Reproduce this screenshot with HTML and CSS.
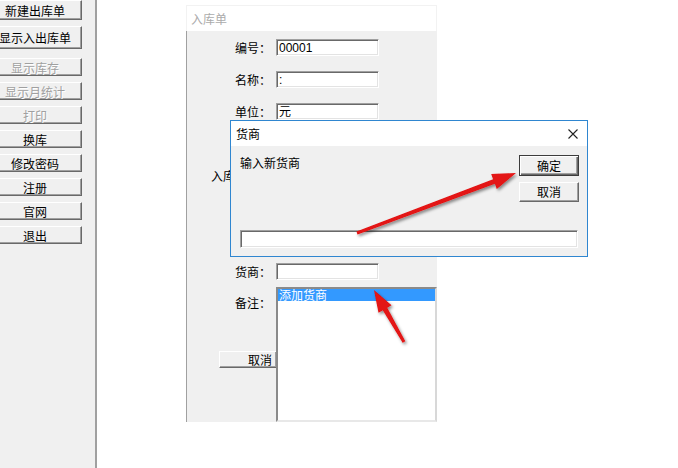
FILE: index.html
```html
<!DOCTYPE html>
<html lang="zh-CN">
<head>
<meta charset="utf-8">
<title>入库单</title>
<link rel="stylesheet" href="styles.css">
</head>
<body>
<div class="app">
  <aside class="sidebar">
    <button class="btn side b1">新建出库单</button>
    <button class="btn side b2">显示入出库单</button>
    <button class="btn side b3 dis">显示库存</button>
    <button class="btn side dis">显示月统计</button>
    <button class="btn side dis">打印</button>
    <button class="btn side">换库</button>
    <button class="btn side">修改密码</button>
    <button class="btn side">注册</button>
    <button class="btn side">官网</button>
    <button class="btn side">退出</button>
  </aside>

  <main class="main">
    <section class="win">
      <div class="win-title">入库单</div>
      <div class="win-body">
        <div class="fields">
          <span class="lbl">编号：</span><div class="field">00001</div>
          <span class="lbl">名称：</span><div class="field">:</div>
          <span class="lbl">单位：</span><div class="field">元</div>
          <span class="lbl"></span><div class="field"></div>
          <span class="lbl clip"><span>入库</span></span><div class="field"></div>
          <span class="lbl"></span><div class="field"></div>
          <span class="lbl"></span><div class="field"></div>
          <span class="lbl">货商：</span><div class="field"></div>
        </div>
        <div class="memo">
          <div class="memo-side">
            <span class="lbl">备注：</span>
            <div class="btn cut">取消</div>
          </div>
          <div class="listbox">
            <div class="sel">添加货商</div>
          </div>
        </div>
      </div>
    </section>
  </main>

  <div class="dialog">
    <div class="dlg-title">
      <span>货商</span>
      <svg class="close" width="10" height="10" viewBox="0 0 10 10"><path d="M0.5 0.5 L9.5 9.5 M9.5 0.5 L0.5 9.5" stroke="#222" stroke-width="1.1" fill="none"/></svg>
    </div>
    <div class="dlg-body">
      <div class="dlg-top">
        <span class="prompt">输入新货商</span>
        <div class="dlg-btns">
          <button class="btn dlg def">确定</button>
          <button class="btn dlg">取消</button>
        </div>
      </div>
      <div class="dlg-input"></div>
    </div>
  </div>

  <svg class="arrows" width="678" height="468" viewBox="0 0 678 468">
    <defs>
      <filter id="sh" x="-20%" y="-20%" width="140%" height="140%">
        <feDropShadow dx="1.5" dy="2" stdDeviation="1.5" flood-color="#000" flood-opacity="0.45"/>
      </filter>
    </defs>
    <polygon filter="url(#sh)" fill="#e31212" points="356.5,231.6 493.1,179.2 491.2,174 516,173 496.8,189 494.9,183.8 357.5,234.4"/>
    <polygon filter="url(#sh)" fill="#e31212" points="402.7,342.75 382.8,310.25 378.5,312.75 374,290 391.5,305.25 387.2,307.75 405.3,341.25"/>
  </svg>
</div>
</body>
</html>
```
FILE: styles.css
```css
* { box-sizing: border-box; }

html, body {
  margin: 0;
  padding: 0;
  background: #fff;
}

body {
  font-family: "Noto Sans CJK SC", "Noto Sans", sans-serif;
  font-size: 12px;
  color: #000;
}

.app {
  position: relative;
  width: 678px;
  height: 468px;
  display: flex;
  overflow: hidden;
}

/* ---------- sidebar ---------- */
.sidebar {
  width: 97px;
  flex: none;
  background: #f0f0f0;
  border-right: 2px solid #a0a0a0;
  display: flex;
  flex-direction: column;
  align-items: flex-start;
  gap: 6px;
}

.btn {
  appearance: none;
  margin: 0;
  padding: 0;
  font: inherit;
  font-size: 12px;
  color: #000;
  background: #f0f0f0;
  border: 1px solid;
  border-color: #fff #696969 #696969 #fff;
  box-shadow: inset -1px -1px 0 #a0a0a0;
  display: flex;
  align-items: center;
  justify-content: center;
  line-height: 14px;
}

.side {
  width: 94px;
  height: 18px;
  margin-left: -12px;
  padding-top: 1px;
}
.side.b1 { height: 20px; margin-top: 0; }
.side.b2 { height: 23px; }
.side.b3 { margin-top: 3px; }

.dis {
  color: #a0a0a0;
  text-shadow: 1px 1px 0 #fff;
}

/* ---------- main window ---------- */
.main {
  flex: 1;
  padding: 5px 0 0 89px;
}

.win {
  width: 251px;
}

.win-title {
  height: 26px;
  padding-left: 4px;
  display: flex;
  align-items: center;
  color: #ababab;
  background: #fff;
  border: 1px solid #f2f2f2;
  border-bottom: none;
}

.win-body {
  height: 391px;
  background: #f0f0f0;
  border-left: 1px solid #a0a0a0;
}

.fields {
  padding-top: 8px;
  display: grid;
  grid-template-columns: 89px 103px;
  grid-auto-rows: 17px;
  row-gap: 15px;
}

.lbl {
  display: block;
  text-align: right;
  padding-right: 5px;
  line-height: 17px;
  white-space: nowrap;
}

.lbl.clip {
  width: 43px;
  overflow: hidden;
  text-align: left;
  padding: 0 0 0 24px;
  line-height: 17px;
}

.field {
  height: 17px;
  background: #fff;
  border: 1px solid;
  border-color: #a0a0a0 #fff #fff #a0a0a0;
  box-shadow: inset 1px 1px 0 #696969, inset -1px -1px 0 #e3e3e3;
  padding-left: 2px;
  line-height: 16px;
  font-family: "Liberation Sans", "Noto Sans CJK SC", sans-serif;
  font-size: 12px;
}

.memo {
  margin-top: 7px;
  display: grid;
  grid-template-columns: 89px 161px;
}

.memo-side {
  padding-top: 7px;
}

.btn.cut {
  margin-top: 40px;
  margin-left: 32px;
  width: 57px;
  height: 17px;
  border-right: none;
  justify-content: flex-end;
  padding-right: 4px;
}

.listbox {
  height: 135px;
  background: #fff;
  border: 2px solid;
  border-color: #8a8a8a #d8d8d8 #e8e8e8 #8a8a8a;
}

.sel {
  height: 12px;
  line-height: 12px;
  padding-left: 1px;
  background: #3399ff;
  color: #fff;
  white-space: nowrap;
}

/* ---------- dialog ---------- */
.dialog {
  position: absolute;
  left: 230px;
  top: 120px;
  width: 358px;
  height: 137px;
  border: 1px solid #2f86d0;
  display: flex;
  flex-direction: column;
  z-index: 3;
}

.dlg-title {
  height: 25px;
  flex: none;
  background: #fff;
  display: flex;
  align-items: center;
  justify-content: space-between;
  padding: 0 9px 0 5px;
}

.close { display: block; }

.dlg-body {
  flex: 1;
  background: #f0f0f0;
  padding: 9px 8px 8px 9px;
  display: flex;
  flex-direction: column;
}

.dlg-top {
  display: flex;
  justify-content: space-between;
  align-items: flex-start;
}

.prompt {
  line-height: 17px;
  margin-top: -1px;
}

.dlg-btns {
  display: flex;
  flex-direction: column;
  gap: 6px;
}

.btn.dlg {
  width: 60px;
  height: 20px;
}

.btn.def {
  height: 21px;
  border: 1px solid #3c3c3c;
  box-shadow: inset 1px 1px 0 #fff, inset -1px -1px 0 #696969, inset -2px -2px 0 #a0a0a0;
}

.dlg-input {
  margin-top: auto;
  margin-right: 1px;
  height: 18px;
  background: #fff;
  border: 1px solid;
  border-color: #a0a0a0 #fff #fff #a0a0a0;
  box-shadow: inset 1px 1px 0 #696969, inset -1px -1px 0 #e3e3e3;
}

/* ---------- annotation arrows ---------- */
.arrows {
  position: absolute;
  left: 0;
  top: 0;
  z-index: 5;
  pointer-events: none;
}
```
